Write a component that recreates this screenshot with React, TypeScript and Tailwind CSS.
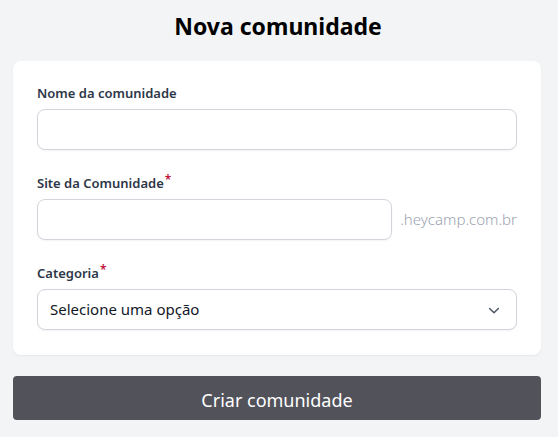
import React from "react";

function Label({ children, required }: { children: React.ReactNode; required?: boolean }) {
  return (
    <div className="h-5 flex items-center text-[13px] font-semibold text-[#2d3748] leading-5">
      <span>{children}</span>
      {required && <span className="text-[#c0143c] text-[12px] leading-none self-start mt-[1px] ml-[1px]">*</span>}
    </div>
  );
}

export default function App() {
  return (
    <div
      className="min-h-[437px] w-full bg-[#f3f4f6] pl-[13px] pr-[17px] pt-[10px] pb-4"
      style={{ fontFamily: '"Noto Sans", "Open Sans", sans-serif' }}
    >
      <h1 className="text-[23px] leading-8 font-bold text-black text-center mb-[19px] pl-[2px]">Nova comunidade</h1>
      <div className="bg-white rounded-lg shadow-[0_1px_2px_rgba(0,0,0,0.06)] pt-[22px] px-6 pb-[25px]">
        <Label>Nome da comunidade</Label>
        <input
          type="text"
          className="mt-[6px] block w-full h-[41px] rounded-lg border border-[#d4d4dc] bg-white shadow-[0_1px_2px_rgba(0,0,0,0.05)] px-3 outline-none"
        />
        <div className="mt-[23px]">
          <Label required>Site da Comunidade</Label>
          <div className="mt-[6px] flex items-center gap-2">
            <input
              type="text"
              className="block flex-1 min-w-0 h-[41px] rounded-lg border border-[#d4d4dc] bg-white shadow-[0_1px_2px_rgba(0,0,0,0.05)] px-3 outline-none"
            />
            <span className="text-[15px] text-[#9ca3af] font-light whitespace-nowrap">.heycamp.com.br</span>
          </div>
        </div>
        <div className="mt-[23px]">
          <Label required>Categoria</Label>
          <div className="mt-[6px] relative h-[41px] rounded-lg border border-[#d4d4dc] bg-white shadow-[0_1px_2px_rgba(0,0,0,0.05)] flex items-center pl-3 pr-[14px]">
            <span className="flex-1 text-[15px] text-[#111827]">Selecione uma opção</span>
            <svg width="16" height="16" viewBox="0 0 20 20" fill="none" stroke="#4b5563" strokeWidth="1.8" strokeLinecap="round" strokeLinejoin="round">
              <path d="M4.5 8l5.5 5.5 5.5-5.5" />
            </svg>
          </div>
        </div>
      </div>
      <button className="mt-[21px] w-full h-[44px] rounded bg-[#52525b] text-white text-[18px] leading-none flex items-center justify-center pt-[3px]">
        Criar comunidade
      </button>
    </div>
  );
}
